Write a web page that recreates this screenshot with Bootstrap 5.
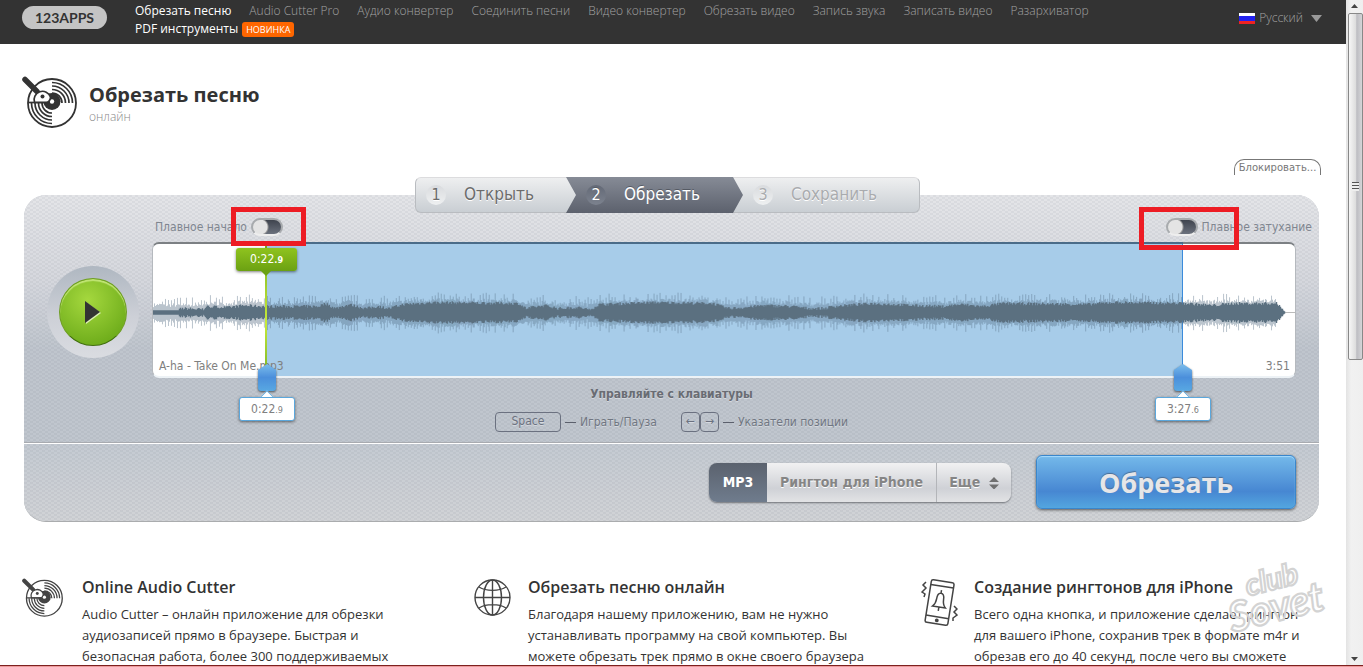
<!DOCTYPE html>
<html lang="ru">
<head>
<meta charset="utf-8">
<meta name="viewport" content="width=device-width, initial-scale=1">
<title>Обрезать песню онлайн</title>
<link href="https://cdn.jsdelivr.net/npm/bootstrap@5.3.0/dist/css/bootstrap.min.css" rel="stylesheet">
<style>
body{font-family:"Open Sans","Noto Sans",sans-serif;font-size:13px;color:#333;background:#fff}
a{text-decoration:none}
.topbar{background:#333;height:44px;padding:2px 24px 4px 22px}
.brand-pill{background:#c4c4c4;color:#333;border-radius:12px;width:85px;height:23px;font:700 14px/23px Lato,sans-serif;text-align:center;margin:4px 28px 0 0}
.menu{column-gap:18px;font-size:12px}
.menu li{line-height:18px}
.menu a{color:#a2a2a2;font-weight:300;white-space:nowrap}
.menu a.on{color:#fff;font-weight:400}
.new-tag{background:#f60;color:#fff;font-size:9px;line-height:15px;border-radius:3px;padding:0 4px}
.lang{color:#a2a2a2;font-size:12px;font-weight:300;margin-top:7px}
.page-title{padding:32px 22px 0}
.page-title h1{font-size:20px;font-weight:700;line-height:30px}
.page-title p{font-size:12px;font-weight:300;line-height:14px;color:#888}
.tool{padding:7px 27px 0 24px;font-family:"DejaVu Sans Condensed","Noto Sans",sans-serif;font-size:12px;color:#808690}
.block-tab{border:1px solid #777;border-bottom:0;border-radius:10px 10px 0 0;background:#fff;color:#777;font:10px/15px "DejaVu Sans",sans-serif;padding:0;width:87px;height:16px;margin-right:-2px}
.steps{width:505px;height:36px;margin:2px 8px -18px 0;position:relative;z-index:2;border-radius:6px;border:1px solid #b9bcc0;border-top-color:#dcdcde;background:linear-gradient(#eeeff0,#c9ced3);font-size:17px;text-shadow:0 1px 0 #fff}
.steps a{color:#6b6b6b;height:36px;margin-top:-1px;gap:18px;padding-left:10px}
.steps .s1{width:150px}
.steps .s2{width:177px;padding-left:20px;color:#fff;text-shadow:0 -1px 0 #555a64;background:linear-gradient(#868b96,#5c616d);clip-path:polygon(0 0,167px 0,177px 50%,167px 100%,0 100%,10px 50%)}
.steps .s3{color:#a9abae}
.num{width:20px;height:20px;border-radius:50%;font-size:16px;line-height:20px;text-align:center;background:linear-gradient(#d9dbde,#eef0f1)}
.s2 .num{background:linear-gradient(#636976,#7c828e)}
.panel{border-radius:22px;overflow:hidden;background:#c0c5cc;border-bottom:1px solid #aaacae}
.dots{background-image:conic-gradient(rgba(90,95,110,.07) 25%,transparent 0 50%,rgba(90,95,110,.07) 0 75%,transparent 0),var(--shade);background-size:6px 4px,100% 100%}
.upper{--shade:linear-gradient(#e4e5e8,#d5d7dd 35%,#bfc5cd 62%,#c0c6ce);padding:0 23px 11px}
.lower{--shade:linear-gradient(#c4cad2,#d1d3d6);border-top:1px solid #fff;box-shadow:0 -1px 0 #a8abb0;padding:11px 23px 12px;gap:25px}
.dial{width:92px;height:92px;border-radius:50%;margin:71px 13px 0 0;background:linear-gradient(#afb7c1,#cdd0d7 55%,#dadce1);padding:12px}
.play{width:68px;height:68px;border-radius:50%;border:1px solid #6e9e22;border-bottom-color:#3f6d0c;background:radial-gradient(circle at 42% 32%,#a5d83e,#70ae1c 75%);box-shadow:inset 0 2px 1px #c2e576}
.fades{height:47px;padding:22px 0 0 3px;margin-right:-16px}
.fades label{line-height:20px;white-space:nowrap}
.fades .mark-wrap{position:relative;display:flex;align-items:center}
.fades input{appearance:none;width:32px;height:18px;border-radius:9px;border:2px solid #a8abae;border-bottom-color:#eee;margin:0;background:radial-gradient(circle at 7px 7px,#e4e4e4 7px,#999 8px,transparent 9px),linear-gradient(#3f444e,#6b717d)}
.frame{position:absolute;border:5px solid #ed1c24;pointer-events:none;z-index:5;top:-10px}
.fr1{left:-20px;width:75px;height:39px}
.fr2{left:-27px;width:100px;height:43px}
.wave{position:relative;height:136px;background:#fff;border-radius:7px;border:1px solid #b5b9be;border-top:2px solid #7c8084;border-bottom:2px solid #edf2f6}
.wave svg.sound{position:absolute;left:0;top:39px;width:100%;height:60px}
.pick{position:absolute;top:0;bottom:0;background:#a7cce9;border-right:1px solid #3b8bdb;box-shadow:0 -2px 0 #4a6b88}
.info{position:absolute;bottom:2px;line-height:16px;color:#808080;white-space:nowrap}
.cursor-line{position:absolute;top:0;bottom:0;width:2px;margin-left:-1px;background:linear-gradient(#79b01e,#c6ea3b 60%,#78b323)}
.play-tip{position:absolute;top:4px;width:61px;height:23px;margin-left:-30px;border-radius:3px;background:linear-gradient(#8fc31f,#6ba112);color:#fff;text-align:center;line-height:22px;box-shadow:0 1px 3px rgba(0,0,0,.5);z-index:2}
.play-tip::after{content:"";position:absolute;left:24px;top:22px;border:6px solid transparent;border-top-color:#6ba112;border-bottom:0}
.grip{position:absolute;bottom:-15px;width:18px;height:27px;margin-left:-8px;z-index:2;filter:drop-shadow(0 1px 1px rgba(0,0,0,.6))}
.grip i{display:block;height:27px;border-radius:0 0 3px 3px;background:linear-gradient(#7bbdec,#4b8fdb 50%,#58a8e2);clip-path:polygon(50% 0,100% 22%,100% 100%,0 100%,0 22%)}
.time-tip{position:absolute;bottom:-45px;width:56px;height:24px;margin-left:-27px;background:#fff;border:1px solid #5ba7dc;border-radius:3px;text-align:center;line-height:22px;color:#808080;box-shadow:0 1px 3px rgba(0,0,0,.5);z-index:2}
.time-tip::before{content:"";position:absolute;left:22px;top:-6px;width:10px;height:10px;background:#fff;border:solid #5ba7dc;border-width:1px 0 0 1px;transform:rotate(45deg);clip-path:polygon(0 0,100% 0,0 100%)}
.play-tip small,.time-tip small{font-size:9px}
.play-tip small{font-weight:700}
.hints{padding-top:6px;text-shadow:0 1px 0 #d5d9df;color:#707681}
.hints b{line-height:20px;color:#696c73}
.hints .keys{height:20px;margin-top:8px}
.hints kbd{background:none;border:1px solid #6b7180;border-radius:4px;color:#6b7180;font:12px/17px "DejaVu Sans Condensed",sans-serif;padding:0;text-align:center;height:20px;width:19px}
.hints kbd.wide{width:66px}
.hints hr{width:11px;margin:0 4px;opacity:1;border-color:#5b606c}
.formats{height:39px;border-radius:8px;overflow:hidden;box-shadow:0 1px 2px #6e7177}
.formats .btn{border:0;border-radius:0;font:bold 14px "DejaVu Sans Condensed",sans-serif;color:#858585;background:linear-gradient(#f1f1f2,#cfd1d6 65%,#e2e3e5);text-shadow:0 1px 0 #fff;padding:0 13px}
.formats .btn.sel{width:58px;padding:0;color:#fff;text-shadow:none;background:linear-gradient(#5b626e,#6f7c8d)}
.formats .btn.more{width:75px;padding:0;border-left:1px solid #b3b5b9}
.cut{width:260px;height:54px;border:1px solid #3a86cb;border-radius:6px;background:linear-gradient(#74b9ea,#4787d2 68%,#53a6df);box-shadow:inset 0 1px 1px #a8dcff,0 1px 3px #555;font:bold 27px "Open Sans",sans-serif;color:#e6e6e8;text-shadow:0 -1px 1px #4b6d94;padding:0}
.features{display:grid;grid-template-columns:452fr 447fr 403fr;padding:54px 22px 0}
.features svg{flex:none}
.features h2{font-size:16px;font-weight:600;line-height:22px;margin-bottom:6px}
.features p{line-height:21px;margin:0}
.f1 svg{margin:2px 19px 0 0}.f2 svg{margin:3px 17px 0 0}.f3 svg{margin:3px 16px 0 0}
.f1 p{max-width:320px}.f2 p{max-width:345px}.f3 p{max-width:335px}
.stamp{position:absolute;right:4px;bottom:22px;width:130px;height:91px;overflow:visible}
.sbar{width:17px;background:linear-gradient(90deg,#e3e3e3,#f1f1f1 30%,#efefef);z-index:3}
.sbar .thumb{height:52vh;margin:5px 0 0 1px;width:15px;border:1px solid #888;border-radius:2px;background:linear-gradient(90deg,#f6f6f6,#dedede 50%,#bdbdc2 60%,#d5d5d8)}
.sbar i{width:7px;height:9px;background:repeating-linear-gradient(#555 0 1px,#eee 1px 3px)}
.edge{height:2px;background:#ec9b9b;border-top:1px solid #7d2020}
</style>
</head>
<body class="vh-100 overflow-hidden d-flex flex-column">
<svg class="d-none">
<symbol id="disc" viewBox="0 0 55 52">
<g fill="none" stroke="currentColor">
<circle cx="30" cy="27" r="24" stroke-width="1.8"/>
<g stroke-width="1.7"><path d="M30 6.500a20.500 20.500 0 0 1 20.500 20.500M30 10a17 17 0 0 1 17 17M30 13.500a13.500 13.500 0 0 1 13.500 13.500M30 17a10 10 0 0 1 10 10M9.500 27a20.500 20.500 0 0 0 20.500 20.500M13 27a17 17 0 0 0 17 17M16.500 27a13.500 13.500 0 0 0 13.500 13.500M20 27a10 10 0 0 0 10 10"/></g>
<path d="M3 3.500l12 12" stroke-width="5.500" stroke-linecap="round"/></g>
<circle cx="30" cy="25.500" r="8.500" fill="currentColor"/><circle cx="30" cy="25.500" r="2.200" fill="#fff"/>
<path d="M12.500 26.500a8.300 8.300 0 1 1 16-5.500c0 3-2 5.500-4 5.500z" fill="#fff" stroke="currentColor" stroke-width="1.700"/>
<circle cx="20.500" cy="20.500" r="2" fill="currentColor"/><path d="M6 26.500h20" stroke="currentColor" stroke-width="1.700"/>
</symbol>
</svg>
<div class="d-flex flex-grow-1 overflow-hidden">
<div class="flex-grow-1 overflow-hidden position-relative">
<header class="topbar d-flex align-items-start">
<a href="#" class="brand-pill flex-shrink-0">123APPS</a>
<nav class="flex-grow-1"><ul class="menu list-unstyled d-flex flex-wrap mb-0">
<li><a class="on" href="#">Обрезать песню</a></li><li><a href="#">Audio Cutter Pro</a></li><li><a href="#">Аудио конвертер</a></li><li><a href="#">Соединить песни</a></li><li><a href="#">Видео конвертер</a></li><li><a href="#">Обрезать видео</a></li><li><a href="#">Запись звука</a></li><li><a href="#">Записать видео</a></li><li><a href="#">Разархиватор</a></li>
<li class="d-flex align-items-center"><a class="on" href="#">PDF инструменты</a><span class="new-tag ms-1">НОВИНКА</span></li>
</ul></nav>
<a href="#" class="lang d-flex align-items-center flex-shrink-0"><svg width="16" height="11" class="me-1"><path fill="#fff" d="M0 0h16v4H0z"/><path fill="#22e" d="M0 3h16v5H0z"/><path fill="#e22" d="M0 8h16v3H0z"/></svg>Русский<svg width="11" height="7" class="ms-2"><path fill="#999" d="M0 0h11L5.500 7z"/></svg></a>
</header>
<div class="page-title d-flex">
<svg width="55" height="52" class="me-2 flex-shrink-0"><use href="#disc"/></svg>
<div class="ms-1 pt-1"><h1 class="mb-0">Обрезать песню</h1><p class="mb-0">онлайн</p></div>
</div>
<main class="tool">
<div class="d-flex justify-content-end pt-4"><button class="block-tab" type="button">Блокировать...</button></div>
<div class="d-flex justify-content-center">
<nav class="steps d-flex">
<a href="#" class="s1 d-flex align-items-center"><span class="num">1</span>Открыть</a>
<a href="#" class="s2 d-flex align-items-center"><span class="num">2</span>Обрезать</a>
<a href="#" class="s3 d-flex align-items-center"><span class="num">3</span>Сохранить</a>
</nav></div>
<section class="panel">
<div class="upper dots">
<div class="d-flex align-items-start">
<div class="dial flex-shrink-0"><button class="play p-0 d-flex align-items-center justify-content-center" type="button" aria-label="Играть"><svg width="18" height="24"><path d="M2 2l15 11L2 24z" fill="#dcefb5"/><path d="M1 1l15 11L1 23z" fill="#333"/></svg></button></div>
<div class="flex-grow-1">
<div class="fades d-flex justify-content-between align-items-start">
<div class="d-flex"><label for="fin" class="me-1">Плавное начало</label><span class="mark-wrap"><input type="checkbox" id="fin"><span class="frame fr1"></span></span></div>
<div class="d-flex"><span class="mark-wrap me-1"><input type="checkbox" id="fout"><span class="frame fr2"></span></span><label for="fout">Плавное затухание</label></div>
</div>
<div class="wave">
<div class="pick" style="left:9.9%;width:80.3%"></div>
<svg class="sound" viewBox="0 0 1143 60" preserveAspectRatio="none"><path d="M0 29.500h1143" stroke="#bbb"/><path id="peaks" stroke="#526b80" stroke-opacity=".4"/><path id="body" stroke="#5b7080" stroke-width="1.4"/></svg>
<span class="info" style="left:6px">A-ha - Take On Me.mp3</span><span class="info" style="right:5px">3:51</span>
<span class="cursor-line" style="left:9.9%"></span>
<span class="play-tip" style="left:9.9%">0:22<small>.9</small></span>
<span class="grip" style="left:9.9%"><i></i></span><span class="time-tip" style="left:9.9%">0:22<small>.9</small></span>
<span class="grip" style="left:90.1%"><i></i></span><span class="time-tip" style="left:90.1%">3:27<small>.6</small></span>
</div></div></div>
<div class="hints text-center"><b>Управляйте с клавиатуры</b>
<div class="keys d-flex justify-content-center align-items-center"><kbd class="wide">Space</kbd><hr>Играть/Пауза<kbd class="ms-4">←</kbd><kbd>→</kbd><hr>Указатели позиции</div></div>
</div>
<div class="lower dots d-flex justify-content-end align-items-center">
<div class="formats d-flex"><button class="btn sel" type="button">MP3</button><button class="btn" type="button">Рингтон для iPhone</button><button class="btn more" type="button">Еще <svg width="10" height="12" class="ms-1"><path d="M0 5l5-5 5 5zM0 7.500h10l-5 5z" fill="#707070"/></svg></button></div>
<button class="btn cut" type="button">Обрезать</button>
</div>
</section>
</main>
<section class="features">
<div class="f1 d-flex"><svg width="41" height="39" color="#444"><use href="#disc"/></svg><div><h2>Online Audio Cutter</h2><p>Audio Cutter – онлайн приложение для обрезки аудиозаписей прямо в браузере. Быстрая и безопасная работа, более 300 поддерживаемых</p></div></div>
<div class="f2 d-flex"><svg width="37" height="37" fill="none" stroke="#444" stroke-width="1.400"><circle cx="18.500" cy="18.500" r="17.500"/><ellipse cx="18.500" cy="18.500" rx="9" ry="17.500"/><path d="M18.500 1v35M1 18.500h35M5 8c7 4.500 20 4.500 27 0M5 29c7-4.500 20-4.500 27 0"/></svg><div><h2>Обрезать песню онлайн</h2><p>Благодаря нашему приложению, вам не нужно устанавливать программу на свой компьютер. Вы можете обрезать трек прямо в окне своего браузера</p></div></div>
<div class="f3 d-flex"><svg width="37" height="48" fill="none" stroke="#444" stroke-width="1.500"><g transform="rotate(9 18 24)"><rect x="7" y="2" width="23" height="43" rx="2"/><path d="M7 7h23M7 38h23M12 28h13c-2-2-3-4-3-8 0-4-1-6-3.500-6S15 16 15 20c0 4-1 6-3 8zM18.500 14v-3M18.500 28v4"/><circle cx="18.500" cy="41.500" r="1.200" fill="#444"/></g><path d="M5 3l-3 3 3 3-4 4 3 2-1 3M33 27l3 3-3 3 3 3-4 3v3"/></svg><div><h2>Создание рингтонов для iPhone</h2><p>Всего одна кнопка, и приложение сделает рингтон для вашего iPhone, сохранив трек в формате m4r и обрезав его до 40 секунд, после чего вы сможете</p></div></div>
</section>
<svg class="stamp" viewBox="0 0 120 84" font-family="Lato" font-style="italic" font-weight="700" fill="#fff" fill-opacity=".3" stroke="#d3d3d3" stroke-width="2"><g transform="rotate(-14 50 50)"><text x="36" y="37" font-size="28">club</text><text x="14" y="66" font-size="38">Sovet</text></g></svg>
</div>
<aside class="sbar flex-shrink-0 d-flex flex-column align-items-center" aria-hidden="true">
<svg width="7" height="4" class="mt-1 flex-shrink-0"><path d="M0 4l3.500-4L7 4z" fill="#444"/></svg>
<div class="thumb d-flex align-items-center justify-content-center"><i></i></div>
<svg width="7" height="4" class="mt-auto mb-1"><path d="M0 0h7L3.500 4z" fill="#444"/></svg>
</aside>
</div>
<div class="edge flex-shrink-0"></div>
<script src="https://cdn.jsdelivr.net/npm/bootstrap@5.3.0/dist/js/bootstrap.bundle.min.js"></script>
<script>
// loudness envelope: [position, half height of the body]
const env=[[0,2],[25,2],[30,3],[50,2],[53,5],[75,4],[90,6],[112,5],[165,5],[172,8],[182,3],[196,7],[212,3],[225,5],[236,3],[250,7],[280,9],[365,8],[373,3],[392,6],[405,3],[425,4],[437,2],[446,7],[500,9],[560,8],[575,3],[592,4],[610,6],[640,5],[655,3],[672,3],[680,5],[720,8],[760,6],[790,5],[808,7],[830,5],[850,8],[935,7],[960,9],[1035,8],[1060,6],[1080,8],[1124,8],[1132,1],[1143,0]];
let seed=7;const rnd=()=>(seed=(seed*16807)%2147483647)/2147483647;
let body='',peaks='',k=0;
for(let x=0;x<1133;x++){
  while(x>env[k+1][0])k++;
  const [a,h]=env[k],[b,j]=env[k+1],v=h+(j-h)*(x-a)/(b-a);
  const r=v+(v>2?rnd()*3-.5:.2);
  body+=`M${x+.5} ${29.5-r}V${29.5+r}`;
  if(x<1124){const p=v*.7+4+rnd()*(x%3?4:10);
  peaks+=`M${x+.5} ${29.5-p}V${29.5+p+1}`;}
}
document.getElementById('body').setAttribute('d',body);
document.getElementById('peaks').setAttribute('d',peaks);
</script>
</body>
</html>
